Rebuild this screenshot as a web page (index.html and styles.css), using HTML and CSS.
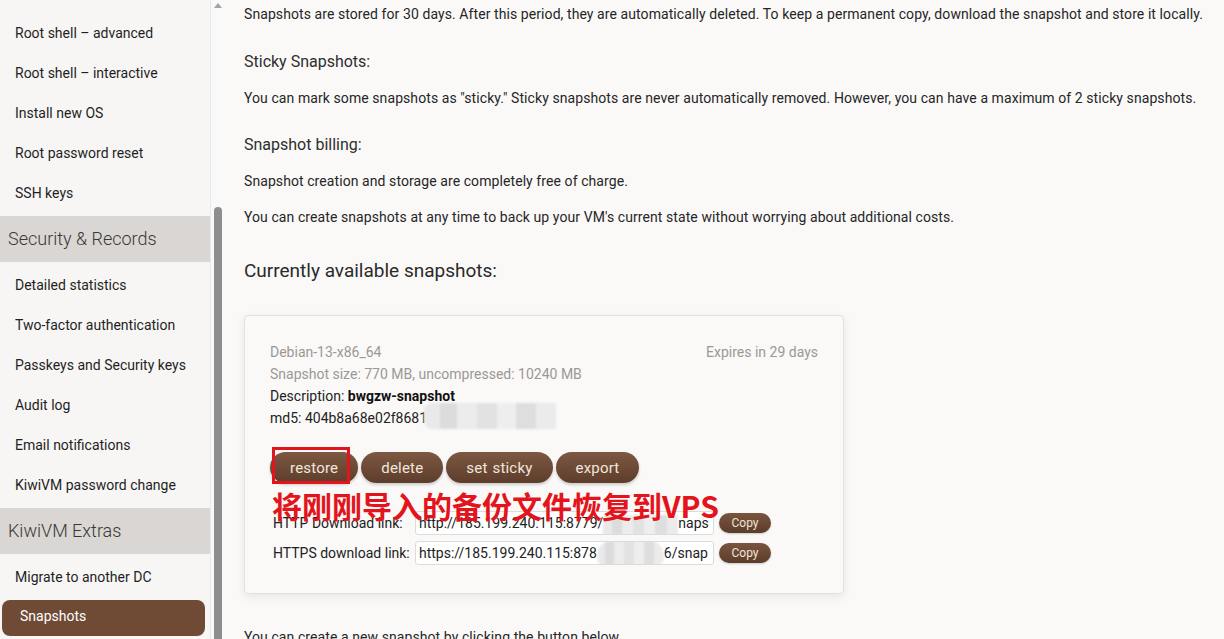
FILE: index.html
```html
<!DOCTYPE html>
<html lang="en">
<head>
<meta charset="utf-8">
<title>KiwiVM Snapshots</title>
<link rel="stylesheet" href="styles.css">
</head>
<body>
<div class="page">
  <aside class="side">
    <nav class="menu">
      <div class="item">Root shell – advanced</div>
      <div class="item">Root shell – interactive</div>
      <div class="item">Install new OS</div>
      <div class="item">Root password reset</div>
      <div class="item">SSH keys</div>
      <div class="group">Security &amp; Records</div>
      <div class="item">Detailed statistics</div>
      <div class="item">Two-factor authentication</div>
      <div class="item">Passkeys and Security keys</div>
      <div class="item">Audit log</div>
      <div class="item">Email notifications</div>
      <div class="item">KiwiVM password change</div>
      <div class="group">KiwiVM Extras</div>
      <div class="item">Migrate to another DC</div>
      <div class="item active">Snapshots</div>
    </nav>
    <div class="track">
      <div class="arrow"></div>
      <div class="thumb"></div>
    </div>
  </aside>
  <main class="main">
    <p class="p first">Snapshots are stored for 30 days. After this period, they are automatically deleted. To keep a permanent copy, download the snapshot and store it locally.</p>
    <h4 class="sub s1">Sticky Snapshots:</h4>
    <p class="p">You can mark some snapshots as "sticky." Sticky snapshots are never automatically removed. However, you can have a maximum of 2 sticky snapshots.</p>
    <h4 class="sub s2">Snapshot billing:</h4>
    <p class="p">Snapshot creation and storage are completely free of charge.</p>
    <p class="p p4">You can create snapshots at any time to back up your VM's current state without worrying about additional costs.</p>
    <h3 class="title">Currently available snapshots:</h3>

    <section class="card">
      <div class="row-top">
        <span class="muted">Debian-13-x86_64</span>
        <span class="muted">Expires in 29 days</span>
      </div>
      <div class="line muted">Snapshot size: 770 MB, uncompressed: 10240 MB</div>
      <div class="line">Description: <b>bwgzw-snapshot</b></div>
      <div class="line">md5: 404b8a68e02f8681<span class="mosaic m-md5"></span></div>

      <div class="actions">
        <button class="btn">restore</button>
        <button class="btn">delete</button>
        <button class="btn">set sticky</button>
        <button class="btn">export</button>
      </div>

      <div class="links">
        <div class="link-row">
          <span class="label">HTTP Download link:</span>
          <div class="field">http://185.199.240.115:8779/<span class="mosaic m-http"></span>naps</div>
          <button class="copy">Copy</button>
        </div>
        <div class="link-row">
          <span class="label">HTTPS download link:</span>
          <div class="field">https://185.199.240.115:878<span class="mosaic m-https"></span>6/snap</div>
          <button class="copy">Copy</button>
        </div>
      </div>

      <div class="mark-box"></div>
      <div class="mark-text">将刚刚导入的备份文件恢复到VPS</div>
    </section>

    <p class="p bottom">You can create a new snapshot by clicking the button below.</p>
  </main>
</div>
</body>
</html>
```
FILE: styles.css
```css
* { box-sizing: border-box; }
html, body { margin: 0; padding: 0; }
body {
  width: 1224px;
  height: 639px;
  overflow: hidden;
  background: #faf9f8;
  font-family: Roboto, "Liberation Sans", sans-serif;
  color: #222;
  font-size: 14px;
}
.page { display: flex; height: 639px; }

/* sidebar */
.side { display: flex; width: 224px; flex: none; }
.menu {
  width: 211px;
  background: #f7f6f5;
  border-right: 1px solid #ebe9e7;
  padding-top: 13px;
  display: flex;
  flex-direction: column;
}
.item {
  height: 40px;
  line-height: 40px;
  padding-left: 15px;
  font-size: 14px;
  color: #1f1f1f;
  white-space: nowrap;
}
.group {
  height: 46px;
  line-height: 46px;
  margin: 3px 0;
  padding-left: 8px;
  background: #d9d6d3;
  color: #3a3836;
  font-size: 18px;
  font-weight: 300;
}
.item.active {
  margin: 3px 5px 0 2px;
  height: 36px;
  line-height: 33px;
  padding-left: 18px;
  background: #6f4b36;
  color: #fff;
  border-radius: 8px;
}
.track {
  width: 13px;
  background: #f9f9f9;
  display: flex;
  flex-direction: column;
  align-items: center;
}
.arrow {
  margin-top: 3px;
  width: 0; height: 0;
  border-left: 4px solid transparent;
  border-right: 4px solid transparent;
  border-bottom: 5px solid #a3a3a3;
}
.thumb {
  margin-top: 199px;
  width: 8px;
  flex: 1;
  background: #8e8e8e;
  border-radius: 4px 4px 0 0;
}

/* main */
.main { flex: 1; padding: 4px 0 0 20px; }
.p { margin: 0; line-height: 20px; font-size: 14px; color: #262626; white-space: nowrap; letter-spacing: 0.08px; }
.sub { margin: 0; font-weight: 400; font-size: 16px; line-height: 24px; color: #2e2e2e; }
.s1 { margin-top: 26px; margin-bottom: 14px; }
.s2 { margin-top: 25px; margin-bottom: 14px; }
.p4 { margin-top: 16px; }
.title { margin: 30px 0 30px; font-weight: 400; font-size: 19px; line-height: 28px; color: #2a2a2a; }

.card {
  position: relative;
  width: 600px;
  height: 279px;
  background: #faf9f8;
  border: 1px solid #e4e2df;
  border-radius: 4px;
  box-shadow: 0 3px 10px rgba(0,0,0,0.08);
  padding: 25px 25px 0 25px;
}
.row-top { display: flex; justify-content: space-between; line-height: 22px; }
.muted { color: #9a9896; }
.line { line-height: 22px; white-space: nowrap; }
.line b { font-weight: 700; color: #111; }

.mosaic {
  display: inline-block;
  vertical-align: middle;
  background:
    linear-gradient(90deg, #e9e9e9 0 12%, #dcdcdc 12% 25%, #ececec 25% 40%, #e2e2e2 40% 55%, #eeeeee 55% 70%, #dedede 70% 85%, #ebebeb 85% 100%);
  filter: blur(1px);
}
.m-md5 { width: 132px; height: 26px; margin-left: -3px; margin-top: -6px; border-radius: 8px 0 0 8px; }
.m-http { width: 75px; height: 20px; }
.m-https { width: 67px; height: 32px; border-radius: 16px; margin-top: -6px; margin-bottom: -8px; }

.actions { display: flex; gap: 3px; margin-top: 23px; }
.btn {
  height: 31px;
  padding: 0 20px;
  border: none;
  border-radius: 16px;
  background: linear-gradient(#7d5842, #5d3d2b);
  color: #f1e6dc;
  font-family: Roboto, "Liberation Sans", sans-serif;
  font-size: 15px;
  letter-spacing: 0.2px;
  word-spacing: 1px;
  box-shadow: 0 2px 3px rgba(0,0,0,0.18);
}

.links { margin-top: 28px; padding-left: 3px; display: flex; flex-direction: column; gap: 6px; }
.link-row { display: flex; align-items: center; }
.label { width: 142px; flex: none; font-size: 14px; color: #222; white-space: nowrap; }
.field {
  width: 299px;
  height: 24px;
  line-height: 22px;
  padding-left: 3px;
  background: #fff;
  border: 1px solid #dedcda;
  border-radius: 3px;
  overflow: hidden;
  white-space: nowrap;
  font-size: 14px;
  color: #222;
}
.copy {
  margin-left: 5px;
  width: 52px;
  height: 20px;
  padding: 0;
  border: none;
  border-radius: 10px;
  background: linear-gradient(#7a553f, #5b3c2a);
  color: #f1e4d6;
  font-family: Roboto, "Liberation Sans", sans-serif;
  font-size: 12px;
  box-shadow: 0 1px 2px rgba(0,0,0,0.2);
}

.mark-box {
  position: absolute;
  left: 27px;
  top: 131px;
  width: 78px;
  height: 37px;
  border: 3px solid #e3141b;
}
.mark-text {
  position: absolute;
  left: 27px;
  top: 171px;
  font-family: "Noto Sans CJK SC", sans-serif;
  font-weight: 700;
  font-size: 30px;
  line-height: 36px;
  color: #e3141b;
  white-space: nowrap;
}

.bottom { margin-top: 33px; }
```
